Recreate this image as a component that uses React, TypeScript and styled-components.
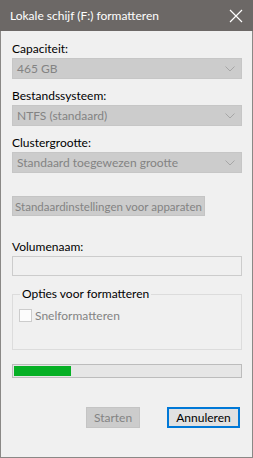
import React from 'react';
import styled, { createGlobalStyle } from 'styled-components';

const GlobalStyle = createGlobalStyle`
  html, body {
    margin: 0;
    padding: 0;
    background: #f0f0f0;
  }
  body {
    font-family: 'Segoe UI', Lato, 'Noto Sans', sans-serif;
    font-size: 12px;
    color: #000;
  }
`;

const Window = styled.div`
  width: 253px;
  height: 458px;
  box-sizing: border-box;
  background: #f0f0f0;
  border: 1px solid #8a8886;
  border-top: 0;
  display: flex;
  flex-direction: column;
`;

const TitleBar = styled.div`
  height: 31px;
  margin: 0 -1px;
  background: #6c6866;
  display: flex;
  align-items: center;
  justify-content: space-between;
  padding: 0 9px 0 10px;
  color: #fff;
  font-size: 12px;
`;

const CloseButton = styled.div`
  width: 16px;
  height: 16px;
  display: flex;
  align-items: center;
  justify-content: center;
`;

const Content = styled.div`
  padding: 11px 10px 0 11px;
  display: flex;
  flex-direction: column;
`;

const Label = styled.div<{ $top?: number }>`
  line-height: 14px;
  height: 14px;
  margin-top: ${(p) => p.$top ?? 0}px;
  margin-bottom: 2px;
`;

const Combo = styled.div`
  height: 21px;
  box-sizing: border-box;
  background: #cccccc;
  border: 1px solid #c6c6c6;
  display: flex;
  align-items: center;
  justify-content: space-between;
  padding: 0 6px 0 4px;
  color: #838383;
  white-space: nowrap;
`;

const WideButton = styled.div`
  align-self: flex-start;
  margin-top: 23px;
  height: 20px;
  box-sizing: border-box;
  background: #cccccc;
  border: 1px solid #c4c4c4;
  color: #838383;
  display: flex;
  align-items: center;
  justify-content: center;
  white-space: nowrap;
  width: 193px;
  font-size: 11.5px;
`;

const TextBox = styled.div`
  height: 20px;
  box-sizing: border-box;
  border: 1px solid #cccccc;
  background: #f0f0f0;
`;

const Group = styled.fieldset`
  margin: 11px 0 0;
  padding: 7px 6px 0 6px;
  height: 63px;
  box-sizing: border-box;
  border: 1px solid #dcdcdc;
  min-width: 0;
`;

const Legend = styled.legend`
  padding: 0 2px;
  margin-left: 1px;
  line-height: 14px;
`;

const CheckRow = styled.div`
  display: flex;
  align-items: center;
  gap: 3px;
  color: #838383;
`;

const CheckBox = styled.span`
  width: 13px;
  height: 13px;
  box-sizing: border-box;
  border: 1px solid #cccccc;
  background: #fcfcfc;
`;

const Progress = styled.div`
  margin-top: 14px;
  height: 14px;
  box-sizing: border-box;
  border: 1px solid #bcbcbc;
  background: #e6e6e6;
  padding: 1px;
  display: flex;
`;

const ProgressFill = styled.div`
  background: #06b025;
  height: 100%;
`;

const ButtonRow = styled.div`
  margin-top: 29px;
  display: flex;
  justify-content: flex-end;
  gap: 27px;
  padding-right: 2px;
`;

const Button = styled.div<{ $primary?: boolean; $disabled?: boolean; $w: number }>`
  width: ${(p) => p.$w}px;
  height: 21px;
  box-sizing: border-box;
  display: flex;
  align-items: center;
  justify-content: center;
  background: ${(p) => (p.$disabled ? '#cccccc' : '#e1e1e1')};
  border: ${(p) => (p.$primary ? '2px solid #0078d7' : '1px solid #c4c4c4')};
  color: ${(p) => (p.$disabled ? '#838383' : '#000')};
`;

const Chevron = () => (
  <svg width="10" height="6" viewBox="0 0 10 6">
    <path d="M0.5 0.5 L5 5 L9.5 0.5" fill="none" stroke="#a6a6a6" strokeWidth="1" />
  </svg>
);

const App: React.FC = () => {
  const progress = 25;
  return (
    <>
      <GlobalStyle />
      <Window>
        <TitleBar>
          <span>Lokale schijf (F:) formatteren</span>
          <CloseButton>
            <svg width="14" height="14" viewBox="0 0 14 14">
              <path d="M1 1 L13 13 M13 1 L1 13" stroke="#fff" strokeWidth="1.2" />
            </svg>
          </CloseButton>
        </TitleBar>
        <Content>
          <Label>Capaciteit:</Label>
          <Combo>
            <span>465 GB</span>
            <Chevron />
          </Combo>
          <Label $top={10}>Bestandssysteem:</Label>
          <Combo>
            <span>NTFS (standaard)</span>
            <Chevron />
          </Combo>
          <Label $top={10}>Clustergrootte:</Label>
          <Combo>
            <span>Standaard toegewezen grootte</span>
            <Chevron />
          </Combo>
          <WideButton>Standaardinstellingen voor apparaten</WideButton>
          <Label $top={24}>Volumenaam:</Label>
          <TextBox />
          <Group>
            <Legend>Opties voor formatteren</Legend>
            <CheckRow>
              <CheckBox />
              <span>Snelformatteren</span>
            </CheckRow>
          </Group>
          <Progress>
            <ProgressFill style={{ width: `${progress}%` }} />
          </Progress>
          <ButtonRow>
            <Button $disabled $w={54}>Starten</Button>
            <Button $primary $w={73}>Annuleren</Button>
          </ButtonRow>
        </Content>
      </Window>
    </>
  );
};

export default App;
